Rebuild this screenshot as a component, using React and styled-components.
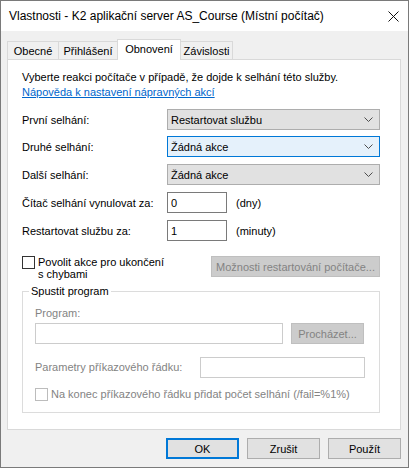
import styled, { createGlobalStyle } from "styled-components";

const GlobalStyle = createGlobalStyle`
  html, body {
    margin: 0;
    padding: 0;
  }
  body {
    background: #f0f0f0;
    font-family: "Liberation Sans", Arial, sans-serif;
    font-size: 11px;
    color: #000;
  }
`;

function Chevron() {
  return (
    <svg width="9" height="5" viewBox="0 0 9 5">
      <path d="M0.5 0.5 L4.5 4.5 L8.5 0.5" fill="none" stroke="#4d4d4d" strokeWidth="1" />
    </svg>
  );
}

function CloseIcon() {
  return (
    <svg width="11" height="11" viewBox="0 0 11 11">
      <path d="M0.5 0.5 L10.5 10.5 M10.5 0.5 L0.5 10.5" stroke="#111" strokeWidth="1" />
    </svg>
  );
}

function App() {
  return (
    <>
      <GlobalStyle />
      <Window>
        <TitleBar>
          <Title>Vlastnosti - K2 aplikační server AS_Course (Místní počítač)</Title>
          <CloseIcon />
        </TitleBar>
        <Content>
          <TabStrip>
            <Tab $w={52}>Obecné</Tab>
            <Tab $w={60}>Přihlášení</Tab>
            <Tab $w={64} $active>Obnovení</Tab>
            <Tab $w={53}>Závislosti</Tab>
          </TabStrip>
          <Panel>
            <Intro>
              Vyberte reakci počítače v případě, že dojde k selhání této služby.
              <br />
              <Link href="#">Nápověda k nastavení nápravných akcí</Link>
            </Intro>

            <FieldRow $mt={9}>
              <span>První selhání:</span>
              <Select>
                Restartovat službu
                <Chevron />
              </Select>
            </FieldRow>
            <FieldRow $mt={6}>
              <span>Druhé selhání:</span>
              <Select $focused>
                Žádná akce
                <Chevron />
              </Select>
            </FieldRow>
            <FieldRow $mt={7}>
              <span>Další selhání:</span>
              <Select>
                Žádná akce
                <Chevron />
              </Select>
            </FieldRow>
            <FieldRow $mt={7}>
              <span>Čítač selhání vynulovat za:</span>
              <InputGroup>
                <TextInput $w={60} readOnly value="0" />
                <span>(dny)</span>
              </InputGroup>
            </FieldRow>
            <FieldRow $mt={7}>
              <span>Restartovat službu za:</span>
              <InputGroup>
                <TextInput $w={60} readOnly value="1" />
                <span>(minuty)</span>
              </InputGroup>
            </FieldRow>

            <OptionsRow>
              <CheckLabel>
                <Checkbox />
                <span>
                  Povolit akce pro ukončení
                  <br />
                  s chybami
                </span>
              </CheckLabel>
              <Button $w={169} disabled>
                Možnosti restartování počítače...
              </Button>
            </OptionsRow>

            <Group>
              <Legend>Spustit program</Legend>
              <Muted>Program:</Muted>
              <ProgramRow>
                <TextInput $w={248} disabled />
                <Button $w={73} disabled>
                  Procházet...
                </Button>
              </ProgramRow>
              <ParamsRow>
                <Muted>Parametry příkazového řádku:</Muted>
                <TextInput $w={165} disabled />
              </ParamsRow>
              <CheckLabel $mt={10} $center>
                <Checkbox $disabled />
                <Muted>Na konec příkazového řádku přidat počet selhání (/fail=%1%)</Muted>
              </CheckLabel>
            </Group>
          </Panel>

          <ButtonBar>
            <Button $w={73} $default>
              OK
            </Button>
            <Button $w={73}>Zrušit</Button>
            <Button $w={73}>Použít</Button>
          </ButtonBar>
        </Content>
      </Window>
    </>
  );
}

export default App;

const Window = styled.div`
  width: 409px;
  height: 468px;
  box-sizing: border-box;
  border: 1px solid #7a7a7a;
  background: #f0f0f0;
  display: flex;
  flex-direction: column;
`;

const TitleBar = styled.div`
  height: 30px;
  flex-shrink: 0;
  background: #fff;
  display: flex;
  align-items: center;
  justify-content: space-between;
  padding: 0 9px 0 8px;
`;

const Title = styled.span`
  font-size: 12px;
  color: #000;
`;

const Content = styled.div`
  display: flex;
  flex-direction: column;
  padding: 8px 7px 0 6px;
`;

const TabStrip = styled.div`
  display: flex;
  align-items: flex-end;
  height: 20px;
`;

const Tab = styled.div`
  box-sizing: border-box;
  width: ${(p) => p.$w}px;
  height: ${(p) => (p.$active ? 21 : 18)}px;
  margin-left: -1px;
  margin-bottom: ${(p) => (p.$active ? -1 : 0)}px;
  position: relative;
  z-index: ${(p) => (p.$active ? 2 : 1)};
  display: flex;
  align-items: center;
  justify-content: center;
  padding-bottom: ${(p) => (p.$active ? 2 : 0)}px;
  border: 1px solid #d9d9d9;
  border-bottom: none;
  background: ${(p) => (p.$active ? "#fff" : "#f0f0f0")};

  &:first-child {
    margin-left: 0;
  }
`;

const Panel = styled.div`
  display: flex;
  flex-direction: column;
  background: #fff;
  border: 1px solid #d9d9d9;
  padding: 10px 20px 16px 14px;
`;

const Intro = styled.div`
  line-height: 15px;
`;

const Link = styled.a`
  color: #0066cc;
  text-decoration: underline;
`;

const FieldRow = styled.div`
  display: grid;
  grid-template-columns: 145px 1fr;
  align-items: center;
  height: 21px;
  margin-top: ${(p) => p.$mt || 0}px;
`;

const Select = styled.div`
  box-sizing: border-box;
  height: 21px;
  display: flex;
  align-items: center;
  justify-content: space-between;
  padding: 0 6px 0 3px;
  border: 1px solid ${(p) => (p.$focused ? "#0078d7" : "#adadad")};
  background: ${(p) => (p.$focused ? "#e5f1fb" : "#e1e1e1")};
`;

const InputGroup = styled.div`
  display: flex;
  align-items: center;
  gap: 9px;
`;

const TextInput = styled.input`
  box-sizing: border-box;
  width: ${(p) => p.$w}px;
  height: 21px;
  margin: 0;
  padding: 0 3px;
  border: 1px solid ${(p) => (p.disabled ? "#cccccc" : "#7a7a7a")};
  background: #fff;
  font-family: inherit;
  font-size: 11px;
  color: #000;
  outline: none;
`;

const OptionsRow = styled.div`
  display: flex;
  justify-content: space-between;
  align-items: flex-start;
  margin-top: 15px;
`;

const CheckLabel = styled.div`
  display: flex;
  align-items: ${(p) => (p.$center ? "center" : "flex-start")};
  gap: 3px;
  line-height: 12px;
  margin-top: ${(p) => p.$mt || 0}px;
`;

const Checkbox = styled.span`
  box-sizing: border-box;
  flex-shrink: 0;
  width: 13px;
  height: 13px;
  border: 1px solid ${(p) => (p.$disabled ? "#bcbcbc" : "#333")};
  background: #fff;
`;

const Button = styled.button`
  box-sizing: border-box;
  width: ${(p) => p.$w}px;
  height: 21px;
  margin: 0;
  padding: 0;
  font-family: inherit;
  font-size: 11px;
  color: #000;
  background: #e1e1e1;
  border: ${(p) => (p.$default ? "2px solid #0078d7" : "1px solid #adadad")};

  &:disabled {
    background: #cccccc;
    border-color: #bfbfbf;
    color: #838383;
  }
`;

const Group = styled.fieldset`
  margin: 5px 0 0 0;
  padding: 9px 14px 11px 12px;
  border: 1px solid #dcdcdc;
  display: flex;
  flex-direction: column;
  min-width: 0;
`;

const Legend = styled.legend`
  margin-left: -6px;
  padding: 0 2px;
  line-height: 13px;
`;

const Muted = styled.span`
  color: #838383;
  line-height: 13px;
`;

const ProgramRow = styled.div`
  display: flex;
  gap: 8px;
  margin-top: 3px;
`;

const ParamsRow = styled.div`
  display: grid;
  grid-template-columns: 165px 165px;
  align-items: center;
  margin-top: 13px;
`;

const ButtonBar = styled.div`
  display: flex;
  justify-content: flex-end;
  gap: 8px;
  margin-top: 8px;
`;
